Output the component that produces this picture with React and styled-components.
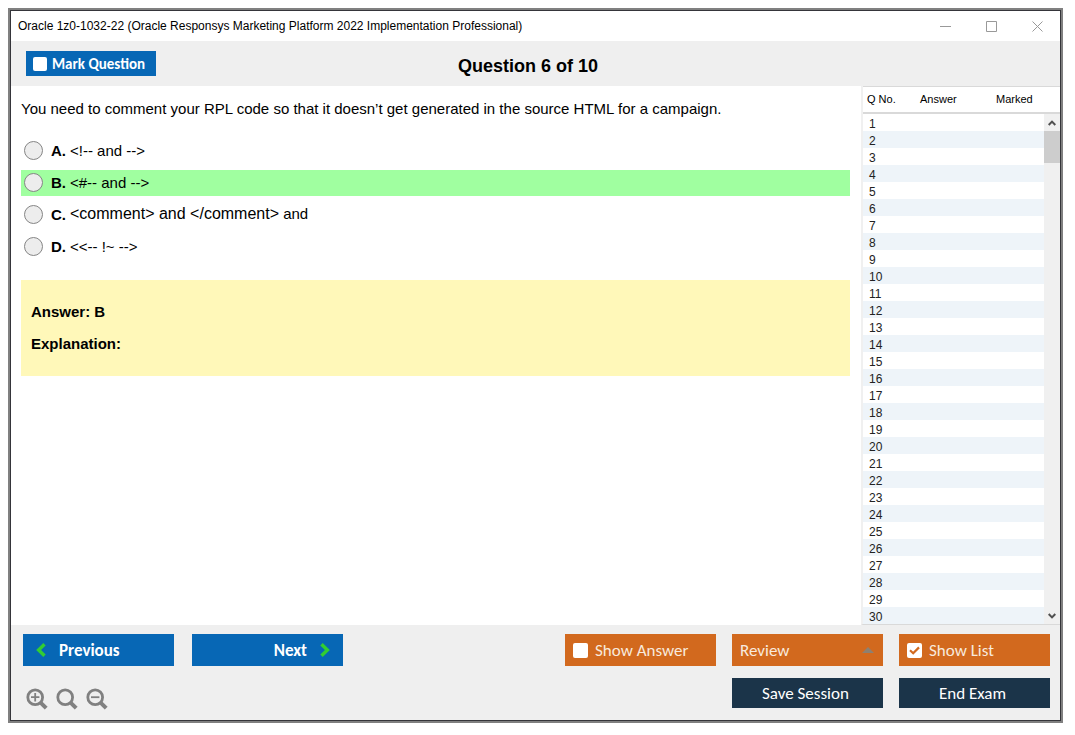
import React, { useState } from 'react';
import styled, { createGlobalStyle } from 'styled-components';

const GlobalStyle = createGlobalStyle`
  * {
    box-sizing: border-box;
  }
  body {
    margin: 0;
    background: #ffffff;
    color: #000000;
    font-family: 'Liberation Sans', Arial, sans-serif;
  }
  button, input, select {
    margin: 0;
    font: inherit;
  }
`;

const Frame = styled.div`
  height: 100vh;
  padding: 8px 12px 12px 8px;
`;

const Window = styled.div`
  display: flex;
  flex-direction: column;
  height: 100%;
  border: 2px solid #808080;
`;

const Inner = styled.div`
  display: flex;
  flex-direction: column;
  flex: 1;
  min-height: 0;
  border: 1px solid #35353a;
`;

const TitleBar = styled.div`
  display: flex;
  align-items: center;
  justify-content: space-between;
  height: 30px;
  padding-left: 7px;
  font-size: 12px;
`;

const WindowButtons = styled.div`
  display: flex;
`;

const WindowButton = styled.button`
  display: flex;
  align-items: center;
  justify-content: center;
  width: 46px;
  height: 28px;
  padding: 0;
  border: none;
  background: none;
`;

const Header = styled.header`
  display: grid;
  grid-template-columns: 1fr auto 1fr;
  align-items: center;
  height: 45px;
  padding: 0 30px 0 15px;
  background: #efefef;
`;

const Heading = styled.h1`
  margin: 0;
  padding-top: 4px;
  font-size: 18px;
  line-height: 22px;
`;

const Main = styled.main`
  display: flex;
  flex: 1;
  min-height: 0;
`;

const Content = styled.section`
  flex: 1;
  padding: 12px 11px 12px 10px;
`;

const Question = styled.p`
  margin: 0 0 18px;
  font-size: 15px;
  line-height: 22px;
`;

const Options = styled.div`
  display: flex;
  flex-direction: column;
  gap: 6px;
`;

const Option = styled.label`
  display: flex;
  align-items: center;
  height: 26px;
  padding: 0 0 2px 3px;
  font-size: 15px;
  background: ${(props) => (props.$correct ? '#a0ffa0' : 'transparent')};
`;

const Radio = styled.input`
  appearance: none;
  width: 19px;
  height: 19px;
  border: 1px solid #858585;
  border-radius: 50%;
  background: #ededed;
  &:checked {
    border: 6px solid #0a67b5;
  }
`;

const Letter = styled.b`
  margin: 0 4px 0 8px;
`;

const OptionText = styled.span`
  font-size: ${(props) => (props.$large ? '16px' : '15px')};
`;

const AnswerBox = styled.div`
  display: flex;
  flex-direction: column;
  gap: 8px;
  margin-top: 20px;
  padding: 20px 10px;
  background: #fff8b9;
  font-size: 15px;
  font-weight: bold;
  line-height: 24px;
`;

const ListPanel = styled.aside`
  display: flex;
  width: 199px;
  border-left: 2px solid #f0f0f0;
  border-bottom: 1px solid #d9d9d9;
  overflow: hidden;
`;

const ListTable = styled.table`
  flex: 1;
  border-collapse: separate;
  border-spacing: 0;
  table-layout: fixed;
  align-self: flex-start;
`;

const HeadCell = styled.th`
  width: ${(props) => props.$width};
  height: 28px;
  padding: 0 0 2px 4px;
  border-top: 1px solid #d9d9d9;
  border-bottom: 2px solid #d9d9d9;
  font-size: 11px;
  font-weight: normal;
  text-align: left;
`;

const ListRow = styled.tr`
  background: ${(props) => (props.$striped ? '#eef4f9' : '#ffffff')};
`;

const Cell = styled.td`
  height: 17px;
  padding: 3px 0 0 6px;
  color: #222222;
  font-size: 12px;
  line-height: 14px;
`;

const ScrollColumn = styled.div`
  display: flex;
  flex-direction: column;
  width: 16px;
`;

const ScrollCap = styled.div`
  height: 28px;
  border-top: 1px solid #d9d9d9;
  border-bottom: 2px solid #d9d9d9;
`;

const ScrollTrack = styled.div`
  display: flex;
  flex: 1;
  flex-direction: column;
  background: #f0f0f0;
`;

const ScrollThumb = styled.div`
  flex: 1;
  &::before {
    content: '';
    display: block;
    height: 32px;
    background: #cdcdcd;
  }
`;

const ScrollArrow = styled.button`
  display: flex;
  align-items: center;
  justify-content: center;
  height: 17px;
  padding: 0;
  border: none;
  background: none;
`;

const Footer = styled.footer`
  display: flex;
  justify-content: space-between;
  padding: 9px 10px 12px 12px;
  background: #efefef;
`;

const Tools = styled.div`
  display: flex;
  flex-direction: column;
  gap: 12px;
`;

const ToolRow = styled.div`
  display: flex;
  gap: ${(props) => props.$gap};
  justify-content: ${(props) => (props.$end ? 'flex-end' : 'flex-start')};
`;

const NavButton = styled.button`
  display: flex;
  align-items: center;
  justify-content: ${(props) => (props.$end ? 'flex-end' : 'flex-start')};
  gap: 13px;
  width: 151px;
  height: 32px;
  padding: 0 13px;
  border: none;
  background: #0767b5;
  color: #ffffff;
  font-family: Carlito, 'Open Sans', sans-serif;
  font-size: 17px;
  font-weight: bold;
`;

const CheckButton = styled.label`
  display: flex;
  align-items: center;
  gap: 7px;
  width: 151px;
  height: 32px;
  padding: 0 8px;
  background: #d2691e;
  color: #f8e9dd;
  font-family: Carlito, 'Open Sans', sans-serif;
  font-size: 17px;
`;

const MarkButton = styled(CheckButton)`
  gap: 5px;
  width: 130px;
  height: 25px;
  padding: 0 7px;
  background: #0767b5;
  color: #ffffff;
  font-size: 15px;
  font-weight: bold;
`;

const CheckSlot = styled.span`
  display: grid;
  place-items: center;
  & > * {
    grid-area: 1 / 1;
  }
  svg {
    pointer-events: none;
  }
`;

const CheckInput = styled.input`
  appearance: none;
  width: ${(props) => props.$size};
  height: ${(props) => props.$size};
  border-radius: 2px;
  background: #ffffff;
`;

const SelectWrap = styled.div`
  display: flex;
  align-items: center;
  width: 151px;
  height: 32px;
  padding-right: 9px;
  background: #d2691e;
`;

const Select = styled.select`
  appearance: none;
  flex: 1;
  height: 32px;
  padding: 0 8px;
  border: none;
  background: none;
  color: #f8e9dd;
  font-family: Carlito, 'Open Sans', sans-serif;
  font-size: 17px;
`;

const DarkButton = styled.button`
  width: 151px;
  height: 30px;
  padding: 0 4px 0 0;
  border: none;
  background: #1b3449;
  color: #ffffff;
  font-family: Carlito, 'Open Sans', sans-serif;
  font-size: 17px;
`;

const ZoomButtons = styled.div`
  display: flex;
  gap: 8px;
  align-items: center;
  height: 30px;
  padding: 12px 0 0 3px;
`;

const ZoomButton = styled.button`
  display: flex;
  padding: 0;
  border: none;
  background: none;
`;

const Chevron = ({ points }) => (
  <svg width="10" height="14" viewBox="0 0 10 14">
    <polyline points={points} fill="none" stroke="#32cd32" strokeWidth="3.4" />
  </svg>
);

const Magnifier = ({ sign }) => (
  <svg width="22" height="22" viewBox="0 0 22 22" fill="none" stroke="#808080">
    <circle cx="9.2" cy="9.2" r="7.4" strokeWidth="2.8" />
    <path d="M13.8 13.8L20.2 20.2" strokeWidth="4" />
    {sign && <path d={sign} strokeWidth="1.8" />}
  </svg>
);

const Check = ({ name, size, checked, onChange }) => (
  <CheckSlot>
    <CheckInput type="checkbox" id={name} $size={size} checked={checked} onChange={onChange} />
    {checked && (
      <svg width="11" height="9" viewBox="0 0 11 9">
        <path d="M1 4.2L4.2 7.2L10 1.4" fill="none" stroke="#d2691e" strokeWidth="2.2" />
      </svg>
    )}
  </CheckSlot>
);

const options = [
  { letter: 'A', text: '<!-- and -->' },
  { letter: 'B', text: '<#-- and -->', correct: true },
  { letter: 'C', text: '<comment> and </comment>', tail: ' and' },
  { letter: 'D', text: '<<-- !~ -->' },
];

const numbers = Array.from({ length: 30 }, (_, i) => i + 1);

const App = () => {
  const [marked, setMarked] = useState(false);
  const [showAnswer, setShowAnswer] = useState(false);
  const [showList, setShowList] = useState(true);
  const [selected, setSelected] = useState(null);

  return (
    <Frame>
      <GlobalStyle />
      <Window>
        <Inner>
          <TitleBar>
            <span>Oracle 1z0-1032-22 (Oracle Responsys Marketing Platform 2022 Implementation Professional)</span>
            <WindowButtons>
              <WindowButton aria-label="Minimize">
                <svg width="11" height="11" viewBox="0 0 11 11" stroke="#999999"><path d="M0 5.5H11" /></svg>
              </WindowButton>
              <WindowButton aria-label="Maximize">
                <svg width="11" height="11" viewBox="0 0 11 11" fill="none" stroke="#999999"><path d="M.5 .5H10.5V10.5H.5Z" /></svg>
              </WindowButton>
              <WindowButton aria-label="Close">
                <svg width="11" height="11" viewBox="0 0 11 11" stroke="#999999"><path d="M.5 .5L10.5 10.5M10.5 .5L.5 10.5" /></svg>
              </WindowButton>
            </WindowButtons>
          </TitleBar>
          <Header>
            <MarkButton htmlFor="mark">
              <Check name="mark" size="14px" checked={marked} onChange={() => setMarked(!marked)} />
              Mark Question
            </MarkButton>
            <Heading>Question 6 of 10</Heading>
          </Header>
          <Main>
            <Content>
              <Question>
                You need to comment your RPL code so that it doesn’t get generated in the source HTML for a campaign.
              </Question>
              <Options>
                {options.map(({ letter, text, tail, correct }) => (
                  <Option key={letter} $correct={correct}>
                    <Radio
                      type="radio"
                      name="option"
                      checked={selected === letter}
                      onChange={() => setSelected(letter)}
                    />
                    <Letter>{letter}.</Letter>
                    <span>
                      <OptionText $large={Boolean(tail)}>{text}</OptionText>
                      {tail}
                    </span>
                  </Option>
                ))}
              </Options>
              <AnswerBox>
                <span>Answer: B</span>
                <span>Explanation:</span>
              </AnswerBox>
            </Content>
            {showList && (
              <ListPanel>
                <ListTable>
                  <thead>
                    <tr>
                      <HeadCell $width="53px">Q No.</HeadCell>
                      <HeadCell $width="76px">Answer</HeadCell>
                      <HeadCell>Marked</HeadCell>
                    </tr>
                  </thead>
                  <tbody>
                    {numbers.map((n) => (
                      <ListRow key={n} $striped={n % 2 === 0}>
                        <Cell>{n}</Cell>
                        <Cell />
                        <Cell />
                      </ListRow>
                    ))}
                  </tbody>
                </ListTable>
                <ScrollColumn>
                  <ScrollCap />
                  <ScrollTrack>
                    <ScrollArrow aria-label="Scroll up">
                      <svg width="8" height="6" viewBox="0 0 8 6"><path d="M.7 5L4 1.6L7.3 5" fill="none" stroke="#505050" strokeWidth="2" /></svg>
                    </ScrollArrow>
                    <ScrollThumb />
                    <ScrollArrow aria-label="Scroll down">
                      <svg width="8" height="6" viewBox="0 0 8 6"><path d="M.7 1L4 4.4L7.3 1" fill="none" stroke="#505050" strokeWidth="2" /></svg>
                    </ScrollArrow>
                  </ScrollTrack>
                </ScrollColumn>
              </ListPanel>
            )}
          </Main>
          <Footer>
            <Tools>
              <ToolRow $gap="18px">
                <NavButton>
                  <Chevron points="8.5,1.2 2.6,7 8.5,12.8" />
                  Previous
                </NavButton>
                <NavButton $end>
                  Next
                  <Chevron points="1.5,1.2 7.4,7 1.5,12.8" />
                </NavButton>
              </ToolRow>
              <ZoomButtons>
                <ZoomButton aria-label="Zoom in"><Magnifier sign="M5 9.2H13.4M9.2 5V13.4" /></ZoomButton>
                <ZoomButton aria-label="Reset zoom"><Magnifier /></ZoomButton>
                <ZoomButton aria-label="Zoom out"><Magnifier sign="M5 9.2H13.4" /></ZoomButton>
              </ZoomButtons>
            </Tools>
            <Tools>
              <ToolRow $gap="16px" $end>
                <CheckButton htmlFor="show-answer">
                  <Check name="show-answer" size="15px" checked={showAnswer} onChange={() => setShowAnswer(!showAnswer)} />
                  Show Answer
                </CheckButton>
                <SelectWrap>
                  <Select aria-label="Review">
                    <option>Review</option>
                  </Select>
                  <svg width="12" height="6" viewBox="0 0 12 6"><path d="M0 6L6 0L12 6Z" fill="#8d8071" /></svg>
                </SelectWrap>
                <CheckButton htmlFor="show-list">
                  <Check name="show-list" size="15px" checked={showList} onChange={() => setShowList(!showList)} />
                  Show List
                </CheckButton>
              </ToolRow>
              <ToolRow $gap="16px" $end>
                <DarkButton>Save Session</DarkButton>
                <DarkButton>End Exam</DarkButton>
              </ToolRow>
            </Tools>
          </Footer>
        </Inner>
      </Window>
    </Frame>
  );
};

export default App;
